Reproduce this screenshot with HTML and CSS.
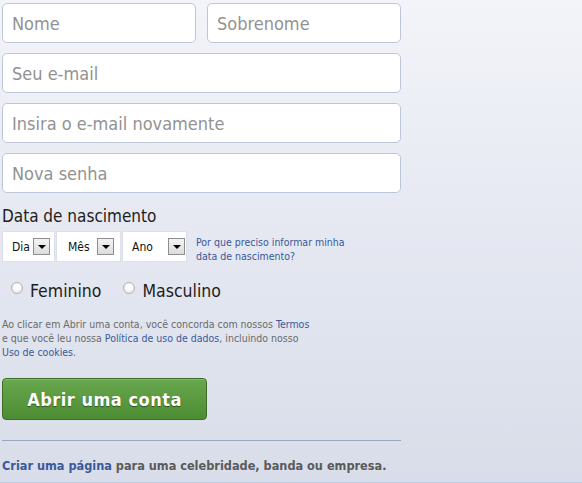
FILE: index.html
```html
<!DOCTYPE html>
<html lang="pt-BR">
<head>
<meta charset="utf-8">
<title>Cadastro</title>
<link rel="stylesheet" href="styles.css">
</head>
<body>
<div class="page">
  <form class="form">
    <div class="row two">
      <div class="field"><span class="ph">Nome</span></div>
      <div class="field"><span class="ph">Sobrenome</span></div>
    </div>
    <div class="field"><span class="ph">Seu e-mail</span></div>
    <div class="field"><span class="ph">Insira o e-mail novamente</span></div>
    <div class="field"><span class="ph">Nova senha</span></div>

    <div class="birth-label">Data de nascimento</div>
    <div class="birth">
      <div class="selects">
        <div class="sel sel-dia"><span>Dia</span><i class="arrow"></i></div>
        <div class="sel sel-mes"><span>Mês</span><i class="arrow"></i></div>
        <div class="sel sel-ano"><span>Ano</span><i class="arrow"></i></div>
      </div>
      <a class="why" href="#">Por que preciso informar minha<br>data de nascimento?</a>
    </div>

    <div class="gender">
      <label class="radio"><i class="dot"></i>Feminino</label>
      <label class="radio"><i class="dot"></i>Masculino</label>
    </div>

    <p class="terms">Ao clicar em Abrir uma conta, você concorda com nossos <a href="#">Termos</a><br>e que você leu nossa <a href="#">Política de uso de dados</a>, incluindo nosso<br><a href="#">Uso de cookies</a>.</p>

    <button type="button" class="submit">Abrir uma conta</button>

    <hr class="sep">

    <p class="page-link"><a href="#">Criar uma página</a> para uma celebridade, banda ou empresa.</p>
  </form>
</div>
</body>
</html>
```

FILE: styles.css
```css
* { box-sizing: border-box; }
html, body { margin: 0; padding: 0; height: 100%; }
body {
  font-family: "DejaVu Sans Condensed", "DejaVu Sans", Tahoma, sans-serif;
  background: linear-gradient(to bottom, #f3f4f9 0%, #e6e9f2 45%, #d8dde9 100%);
  border-bottom: 1px solid #c4cde0;
  overflow: hidden;
}
.page { padding: 3px 0 0 2px; }
.form { width: 399px; display: flex; flex-direction: column; }
.row.two { display: flex; gap: 11px; }
.row.two .field { flex: 1; }
.field {
  height: 40px;
  background: #fff;
  border: 1px solid #bdc7d8;
  border-radius: 5px;
  padding: 0 9px;
  display: flex;
  align-items: center;
  margin-bottom: 10px;
}
.ph { font-size: 18px; color: #929292; }

.birth-label { font-size: 17px; color: #1d1d1d; margin-top: 2px; line-height: 22px; }
.birth { display: flex; align-items: flex-start; margin-top: 4px; }
.selects { display: flex; gap: 1px; }
.sel {
  height: 31px;
  background: #fff;
  border: 1px solid #dbe0ea;
  display: flex; align-items: center;
  font-size: 12px; color: #111;
}
.sel-dia { width: 53px; padding-left: 9px; }
.sel-dia span { margin-right: 3px; }
.sel-mes { width: 65px; padding-left: 11px; }
.sel-mes span { margin-right: 7px; }
.sel-ano { width: 65px; padding-left: 9px; }
.sel-ano span { margin-right: 15px; }
.arrow {
  width: 17px; height: 17px;
  border: 1px solid #8d8d8d;
  background: linear-gradient(#f4f4f4, #dcdcdc);
  position: relative;
  display: block;
}
.arrow::after {
  content: "";
  position: absolute; left: 4px; top: 6px;
  border-left: 4px solid transparent;
  border-right: 4px solid transparent;
  border-top: 4px solid #000;
}
.why {
  font-size: 10.5px; line-height: 14px; color: #3b5998; text-decoration: none;
  margin-left: 9px; margin-top: 4px;
}

.gender { display: flex; gap: 22px; margin-top: 18px; padding-left: 9px; }
.radio { display: flex; align-items: center; font-size: 17.5px; color: #1d1d1d; }
.dot {
  width: 12px; height: 12px; border-radius: 50%;
  border: 1px solid #b4b4b4;
  background: radial-gradient(circle at 50% 40%, #fff 30%, #e4e4e4 80%);
  margin-right: 7px; margin-top: -6px;
  display: block;
}

.terms {
  font-size: 10.5px; line-height: 14px; color: #6a6a6a;
  margin: 16px 0 0 0;
}
.terms a { color: #3b5998; text-decoration: none; }

.submit {
  margin-top: 19px;
  width: 205px; height: 42px;
  border: 1px solid #3b6e22;
  border-radius: 4px;
  background: linear-gradient(#69a74e, #4c8c32);
  color: #fff;
  font-family: inherit;
  font-weight: bold;
  font-size: 18px;
  letter-spacing: 0.5px;
  text-shadow: 0 1px 1px rgba(0,0,0,0.45);
  box-shadow: inset 0 1px 0 #83bd6a;
  cursor: pointer;
}

.sep { margin: 20px 0 0 0; border: 0; border-top: 1px solid #9ba7c1; height: 0; width: 399px; }

.page-link {
  margin: 17px 0 0 0;
  font-size: 12.6px; font-weight: bold; color: #5a5a5a;
}
.page-link a { color: #3b5998; text-decoration: none; }
```
